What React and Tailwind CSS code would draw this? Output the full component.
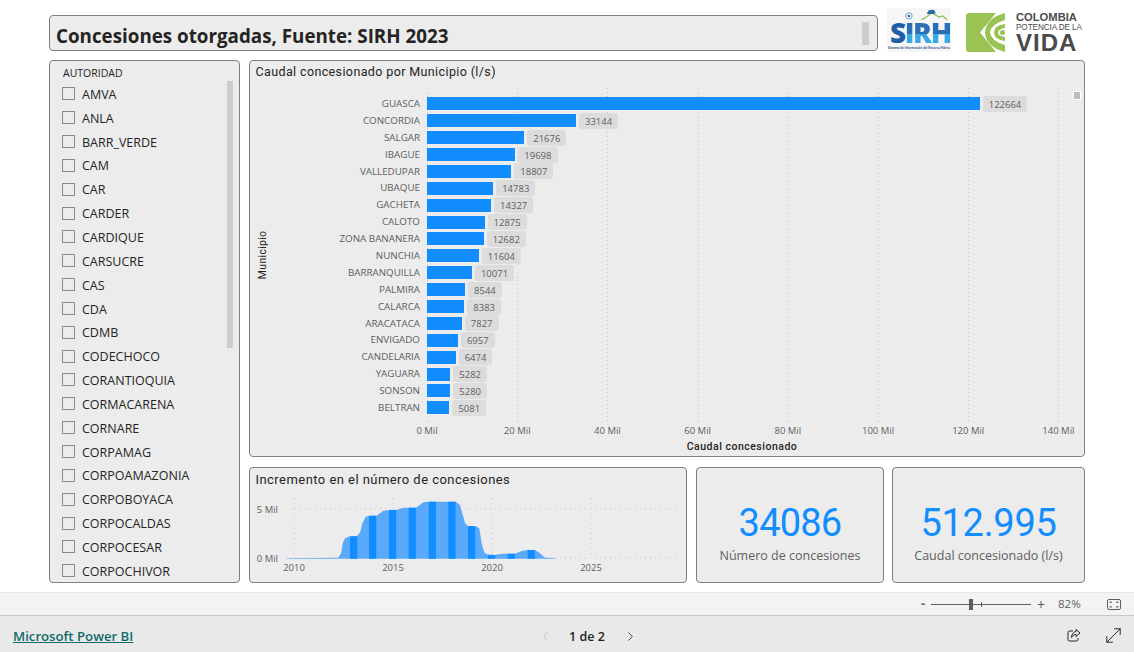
import React from "react";
import { ChevronLeft, ChevronRight, MoveDiagonal } from "lucide-react";

const seg = "font-['Open_Sans',sans-serif]";
const din = "font-['Roboto',sans-serif]";

const autoridades = ["AMVA","ANLA","BARR_VERDE","CAM","CAR","CARDER","CARDIQUE","CARSUCRE","CAS","CDA","CDMB","CODECHOCO","CORANTIOQUIA","CORMACARENA","CORNARE","CORPAMAG","CORPOAMAZONIA","CORPOBOYACA","CORPOCALDAS","CORPOCESAR","CORPOCHIVOR"];
const municipios = [["GUASCA",122664],["CONCORDIA",33144],["SALGAR",21676],["IBAGUE",19698],["VALLEDUPAR",18807],["UBAQUE",14783],["GACHETA",14327],["CALOTO",12875],["ZONA BANANERA",12682],["NUNCHIA",11604],["BARRANQUILLA",10071],["PALMIRA",8544],["CALARCA",8383],["ARACATACA",7827],["ENVIGADO",6957],["CANDELARIA",6474],["YAGUARA",5282],["SONSON",5280],["BELTRAN",5081]];
const ticks = [0,20,40,60,80,100,120,140];

const zoomPts = [[125,295],[280,293],[288,280],[293,250],[300,235],[315,229],[336,229],[346,215],[352,190],[362,170],[372,167],[395,167],[415,152],[432,150],[453,150],[475,143],[491,143],[513,143],[535,127],[551,125],[632,125],[645,135],[652,160],[660,190],[669,198],[691,198],[703,205],[710,250],[718,278],[729,284],[750,285],[770,281],[788,281],[810,281],[830,273],[848,270],[870,270],[885,280],[900,293],[930,294],[930,296],[125,296]];
const areaPath = "M" + zoomPts.map(([x,y]) => `${(x/3+245).toFixed(1)} ${(y/3+460).toFixed(1)}`).join("L") + "Z";
const bands = [315,372,432,491,551,610,669,729,788,848];
const yearX = [[2010,294],[2015,393],[2020,492],[2025,591]];

function Panel({ className = "", children }) {
  return <div className={"rounded-[4px] border border-[#808080] bg-[#ececec] " + className}>{children}</div>;
}

function Slicer() {
  return (
    <Panel className="relative w-[191px] h-[523px] overflow-hidden pl-[12px] pt-[6px]">
      <div className={seg + " text-[10.5px] leading-[13px] text-[#252423] pl-[1px]"}>AUTORIDAD</div>
      <div className="mt-[3.4px] flex flex-col">
        {autoridades.map((a) => (
          <div key={a} className="flex items-center h-[23.85px]">
            <span className="w-[13px] h-[13px] border border-[#8a8a8a] mr-[7px] -mt-[3px]" />
            <span className={seg + " text-[12.5px] text-[#252423]"}>{a}</span>
          </div>
        ))}
      </div>
      <div className="absolute left-[177px] top-[20px] w-[6px] h-[267px] bg-[#cdcdcd]" />
    </Panel>
  );
}

function BarChart() {
  return (
    <Panel className="relative h-[397px] flex flex-col overflow-hidden">
      <div className={din + " text-[12.5px] leading-[16px] tracking-[0.38px] text-[#252423] pl-[5.5px] pt-[3px] h-[20px]"}>Caudal concesionado por Municipio (l/s)</div>
      <div className="relative flex-1">
        {ticks.map((t) => (
          <div key={t} className="absolute top-[7px] h-[333px] w-px bg-[repeating-linear-gradient(to_bottom,#c4c4c4_0,#c4c4c4_1px,transparent_1px,transparent_4px)]" style={{ left: 177 + t * 4.51 }} />
        ))}
        <div className="relative pt-[14.4px] pl-[20px]">
          {municipios.map(([m, v]) => (
            <div key={m} className="flex items-center h-[16.9px]">
              <div className={seg + " w-[150px] pt-[1px] text-right text-[9.8px] text-[#605e5c] whitespace-nowrap"}>{m}</div>
              <div className="ml-[6.5px] h-[13px] bg-[#118dff] shrink-0" style={{ width: v * 0.00451 }} />
              <div className={seg + " ml-[3px] h-[16px] rounded-[3px] bg-[#dcdcdc] px-[6px] text-[9.5px] leading-[17px] text-[#605e5c]"}>{v}</div>
            </div>
          ))}
        </div>
        <div className="relative h-[18px] mt-[8px] ml-[177px]">
          {ticks.map((t) => (
            <span key={t} className={seg + " absolute -translate-x-1/2 text-[9.5px] leading-[14px] text-[#605e5c] whitespace-nowrap"} style={{ left: t * 4.51 }}>{t} Mil</span>
          ))}
        </div>
        <div className={din + " text-center pl-[156px] pr-[6px] -mt-[1px] text-[10.5px] leading-[12px] font-medium tracking-[0.5px] text-[#252423]"}>Caudal concesionado</div>
        <div className={din + " absolute left-[6px] top-[166px] -rotate-90 origin-center text-[10.5px] font-normal tracking-[0.3px] text-[#252423] w-[14px] flex justify-center"}>Municipio</div>
      </div>
      <div className="absolute left-[823px] top-[30px] w-[8px] h-[9px] bg-[#bdbdbd] border border-white" />
    </Panel>
  );
}

function AreaChart() {
  return (
    <Panel className="w-[438px] h-[116px] flex flex-col overflow-hidden">
      <div className={din + " text-[13px] leading-[16px] tracking-[0.45px] text-[#252423] pl-[5.5px] pt-[4px] h-[23px]"}>Incremento en el número de concesiones</div>
      <svg width="436" height="91" viewBox="250 491 436 91" className="block">
        <defs><clipPath id="ar"><path d={areaPath} /></clipPath></defs>
        <path d="M290 509H678M290 558H678" stroke="#c4c4c4" strokeWidth="1" strokeDasharray="1 4" />
        {yearX.map(([y, x]) => <path key={y} d={`M${x} 498V558`} stroke="#c4c4c4" strokeWidth="1" strokeDasharray="1 4" />)}
        <path d={areaPath} fill="#5aa9fb" />
        <g clipPath="url(#ar)">
          {bands.map((b) => <rect key={b} x={b/3+245} y="495" width="7.2" height="65" fill="#118dff" />)}
        </g>
        <text x="278" y="513" textAnchor="end" fontFamily="Open Sans" fontSize="9.5" fill="#605e5c">5 Mil</text>
        <text x="278" y="562" textAnchor="end" fontFamily="Open Sans" fontSize="9.5" fill="#605e5c">0 Mil</text>
        {yearX.map(([y, x]) => <text key={y} x={x} y="571" textAnchor="middle" fontFamily="Open Sans" fontSize="9.5" fill="#605e5c">{y}</text>)}
      </svg>
    </Panel>
  );
}

function Card({ value, label, className, size }) {
  return (
    <Panel className={"h-[116px] flex flex-col items-center pt-[33px] " + className}>
      <div className={din + " leading-[44px] text-[#118dff] " + size}>{value}</div>
      <div className={seg + " text-[12.5px] leading-[16px] text-[#605e5c] mt-[3px]"}>{label}</div>
    </Panel>
  );
}

function SirhLogo() {
  return (
    <div className="relative w-[64px] h-[44px] bg-[#f6f6f6] overflow-hidden">
      <svg className="absolute left-0 top-0" width="64" height="12" viewBox="0 0 64 12">
        <path d="M33 13l12-8 7 4 4-1 7 7" fill="none" stroke="#8dbf5a" strokeWidth="1.2" />
        <path d="M41 6c-1.500 0-1.500-2 0-2 0-1.500 2-2.500 4-2 1.500-.5 3 .5 3 2 1 .5.500 2-1 2z" fill="#2f6cae" />
        <circle cx="22" cy="8" r="3.200" fill="none" stroke="#6fa8d8" strokeWidth="1" />
        <circle cx="22" cy="8" r="1.300" fill="#2f6cae" />
      </svg>
      <div className="absolute left-[3px] top-[12px] flex text-[28px] leading-[25px] font-extrabold font-['Open_Sans',sans-serif] tracking-[-1.4px]">
        <span className="text-[#1f5fa8]">S</span>
        <span className="bg-[linear-gradient(#2a6eb5_55%,#39a9e3_55%)] bg-clip-text text-transparent">IRH</span>
      </div>
      <div className={seg + " absolute left-[1px] top-[38px] w-[62px] overflow-hidden text-[2.9px] leading-[5px] font-bold text-[#3a5a8c] whitespace-nowrap"}>Sistema de Información del Recurso Hídrico</div>
    </div>
  );
}

function ColombiaLogo() {
  return (
    <div className="flex items-center gap-[11px]">
      <svg width="39" height="39" viewBox="0 0 39 39" fill="#9bc254">
        <path d="M3 0H30L14 19.500 30 39H3a3 3 0 0 1-3-3V3a3 3 0 0 1 3-3z" />
        <path d="M39 0v7Q25 11 24 19.500 25 28 39 32v7Q20 34 19 19.500 20 5 39 0z" />
        <path d="M39 11v4Q32 16 32 19.500 32 23 39 24v4Q28 27 28 19.500 28 12 39 11z" />
        <circle cx="36.500" cy="19.500" r="2.500" />
      </svg>
      <div className="w-[61px] -mt-[1px] flex flex-col text-[#4a4a4a] font-['Liberation_Sans',sans-serif] whitespace-nowrap">
        <span className="text-[11.2px] leading-[12px] font-bold">COLOMBIA</span>
        <span className="text-[8.2px] leading-[10px] tracking-[-0.1px]">POTENCIA DE LA</span>
        <span className="text-[24px] leading-[20px] font-bold tracking-[1px]">VIDA</span>
      </div>
    </div>
  );
}

function StatusBar() {
  return (
    <div className="h-[24px] bg-[#f3f3f3] border-y border-t-[#e6e6e6] border-b-[#c8c8c8] flex items-center justify-end pr-[13px]">
      <span className={seg + " text-[13px] font-bold text-[#605e5c] w-[10px]"}>-</span>
      <div className="relative w-[100px] h-[1px] bg-[#605e5c]">
        <div className="absolute left-[38px] -top-[5px] w-[4px] h-[11px] bg-[#605e5c]" />
        <div className="absolute left-[50px] -top-[2px] w-[1px] h-[5px] bg-[#605e5c]" />
      </div>
      <span className={seg + " text-[14px] text-[#605e5c] ml-[6px] w-[12px]"}>+</span>
      <span className={seg + " text-[11.5px] text-[#605e5c] ml-[9px] w-[24px]"}>82%</span>
      <svg className="ml-[25px]" width="14" height="11" viewBox="0 0 14 11" fill="none" stroke="#605e5c">
        <rect x="0.500" y="0.500" width="13" height="10" rx="1.500" />
        <path d="M3 4V3h2M9 3h2v1M11 7v1H9M5 8H3V7" />
      </svg>
    </div>
  );
}

function BottomBar() {
  return (
    <div className="relative flex-1 bg-[#e9e9e9] flex items-center pl-[13px]">
      <a className={seg + " text-[13.2px] font-semibold underline text-[#0f6b6b] pt-[6px]"}>Microsoft Power BI</a>
      <div className="absolute left-[538px] top-[10px] flex items-center">
        <ChevronLeft size={15} strokeWidth={1.3} className="text-[#b5b5b5]" />
        <span className={seg + " ml-[16px] w-[38px] mt-[2px] text-[12.5px] font-semibold text-[#252423] whitespace-nowrap"}>1 de 2</span>
        <ChevronRight size={15} strokeWidth={1.3} className="ml-[16px] text-[#252423]" />
      </div>
      <div className="ml-auto mr-[9px] flex items-center gap-[20px] mt-[3px]">
        <svg width="15" height="15" viewBox="0 0 15 15" fill="none" stroke="#252423" strokeWidth="1">
          <path d="M6 3H2.500A1.500 1.500 0 0 0 1 4.500v7A1.500 1.500 0 0 0 2.500 13h7a1.500 1.500 0 0 0 1.500-1.500V10" />
          <path d="M9 1.500l4 3.500-4 3.500V6.500C7 6.500 5.500 7.500 4.500 9.500 4.500 6.500 6.500 3.800 9 3.500z" />
        </svg>
        <MoveDiagonal size={23} strokeWidth={1} className="text-[#252423]" />
      </div>
    </div>
  );
}

export default function App() {
  return (
    <div className="w-[1134px] h-[652px] flex flex-col bg-white overflow-hidden">
      <div className="h-[592px] flex flex-col pl-[49px] pr-[49px]">
        <div className="flex h-[60px] items-start">
          <Panel className="relative mt-[15px] w-[829px] h-[36px] flex items-center pl-[6px] pt-[7px]">
            <span className={seg + " text-[18.8px] font-bold text-[#252423] whitespace-nowrap"}>Concesiones otorgadas, Fuente: SIRH 2023</span>
            <div className="absolute left-[812px] top-[6px] w-[7px] h-[23px] bg-[#cdcdcd]" />
          </Panel>
          <div className="ml-[9px] mt-[8px]"><SirhLogo /></div>
          <div className="ml-[15px] mt-[12px]"><ColombiaLogo /></div>
        </div>
        <div className="flex gap-[9px]">
          <Slicer />
          <div className="w-[836px] flex flex-col gap-[10px]">
            <BarChart />
            <div className="flex">
              <AreaChart />
              <Card value="34086" label="Número de concesiones" size="text-[38px] tracking-[-0.8px]" className="ml-[9px] w-[188px]" />
              <Card value="512.995" label="Caudal concesionado (l/s)" size="text-[38px] tracking-[-0.3px]" className="ml-[8px] w-[193px]" />
            </div>
          </div>
        </div>
      </div>
      <StatusBar />
      <BottomBar />
    </div>
  );
}
